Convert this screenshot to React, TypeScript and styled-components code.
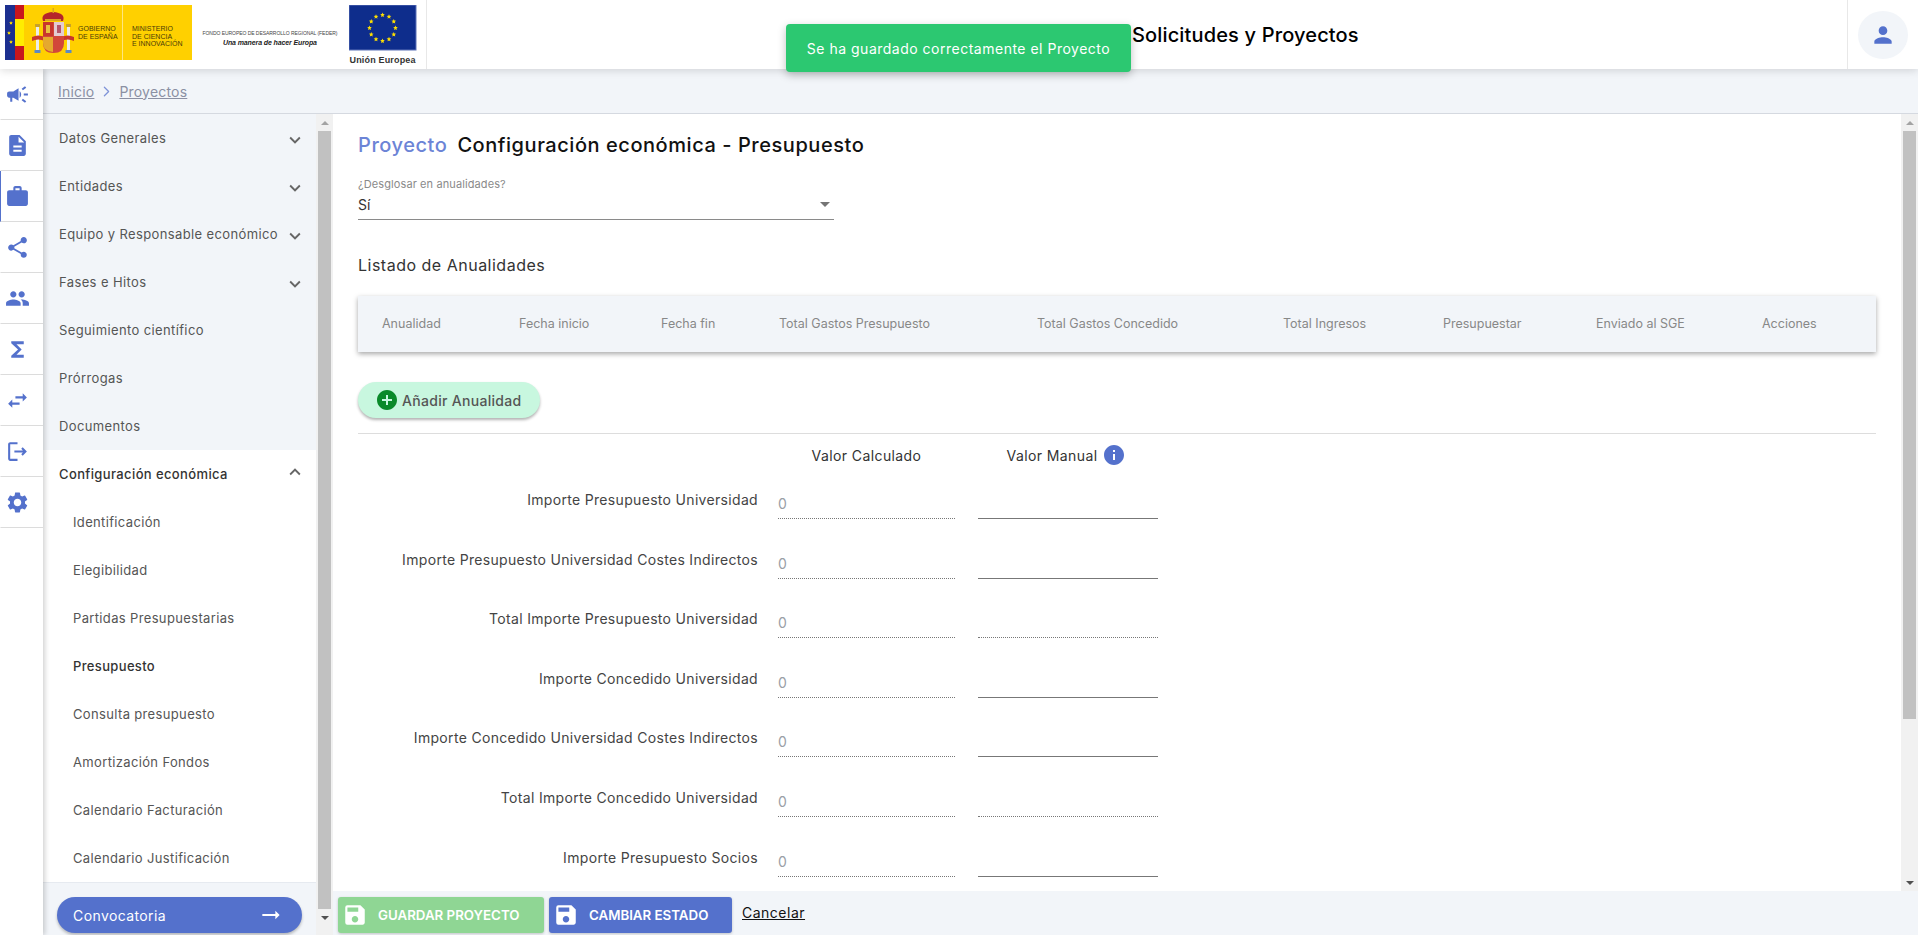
import { ChevronRight } from 'lucide-react'
import {
  MdAddCircle,
  MdArrowRightAlt,
  MdArrowDropDown,
  MdCampaign,
  MdDescription,
  MdExpandLess,
  MdExpandMore,
  MdFunctions,
  MdInfo,
  MdOutlineLogout,
  MdPeople,
  MdPerson,
  MdSave,
  MdSettings,
  MdShare,
  MdSwapHoriz,
  MdWork
} from 'react-icons/md'
import styled, { createGlobalStyle } from 'styled-components'

const PRIMARY = '#5471cc'
const PALE = '#f2f5f9'
const FONT = 'Inter, "Noto Sans", sans-serif'

const GlobalStyle = createGlobalStyle`
  html, body {
    margin: 0;
    height: 100%;
    overflow: hidden;
    background: #fff;
    font-family: ${FONT};
  }
  * {
    box-sizing: border-box;
  }
`

const railIcons = [
  MdCampaign,
  MdDescription,
  MdWork,
  MdShare,
  MdPeople,
  MdFunctions,
  MdSwapHoriz,
  MdOutlineLogout,
  MdSettings
]

const topItems = [
  { label: 'Datos Generales', arrow: true },
  { label: 'Entidades', arrow: true },
  { label: 'Equipo y Responsable económico', arrow: true },
  { label: 'Fases e Hitos', arrow: true },
  { label: 'Seguimiento científico' },
  { label: 'Prórrogas' },
  { label: 'Documentos' }
]

const subItems = [
  'Identificación',
  'Elegibilidad',
  'Partidas Presupuestarias',
  'Presupuesto',
  'Consulta presupuesto',
  'Amortización Fondos',
  'Calendario Facturación',
  'Calendario Justificación'
]

const columns = [
  'Anualidad',
  'Fecha inicio',
  'Fecha fin',
  'Total Gastos Presupuesto',
  'Total Gastos Concedido',
  'Total Ingresos',
  'Presupuestar',
  'Enviado al SGE',
  'Acciones'
]

const amounts = [
  { label: 'Importe Presupuesto Universidad', manual: true },
  { label: 'Importe Presupuesto Universidad Costes Indirectos', manual: true },
  { label: 'Total Importe Presupuesto Universidad' },
  { label: 'Importe Concedido Universidad', manual: true },
  { label: 'Importe Concedido Universidad Costes Indirectos', manual: true },
  { label: 'Total Importe Concedido Universidad' },
  { label: 'Importe Presupuesto Socios', manual: true }
]

const Star = ({ x, y, r }: { x: number; y: number; r: number }) => {
  const points = Array.from({ length: 10 }, (_, i) => {
    const radius = i % 2 ? r * 0.45 : r
    const angle = (Math.PI / 5) * i - Math.PI / 2
    return `${x + radius * Math.cos(angle)},${y + radius * Math.sin(angle)}`
  })
  return <polygon points={points.join(' ')} fill='#ffe000' />
}

const SpainLogo = () => (
  <svg width='187' height='55' viewBox='0 0 187 55'>
    <rect width='187' height='55' fill='#ffd000' />
    <rect width='10' height='55' fill='#1c2f8f' />
    <rect x='10' width='9' height='55' fill='#c8161d' />
    <rect x='10' y='14' width='9' height='27' fill='#ffec00' />
    <Star x={6} y={18} r={2} />
    <Star x={4} y={28} r={2} />
    <Star x={6} y={37} r={2} />
    <rect x='117' width='1' height='55' fill='#ffe680' />
    {/* crown */}
    <path d='M38 16 q-3 -8 10 -9 q13 1 10 9 z' fill='#b5252a' />
    <rect x='40' y='14' width='16' height='2' fill='#d9a520' />
    <rect x='47.500' y='3' width='1.500' height='5' fill='#d9a520' />
    {/* pillars */}
    <rect x='30' y='19' width='5' height='3' fill='#c9a227' />
    <rect x='31' y='22' width='3' height='23' fill='#ececec' />
    <rect x='61' y='19' width='5' height='3' fill='#c9a227' />
    <rect x='62' y='22' width='3' height='23' fill='#ececec' />
    <rect x='29.500' y='45' width='6' height='3' fill='#5b8ac4' />
    <rect x='60.500' y='45' width='6' height='3' fill='#5b8ac4' />
    {/* ribbons */}
    <path d='M27 32 q6 -3 13 0 v4 q-7 -3 -13 0 z' fill='#c8362d' />
    <path d='M69 32 q-6 -3 -13 0 v4 q7 -3 13 0 z' fill='#c8362d' />
    {/* shield */}
    <path d='M38 17 h21 v21 q0 10 -10.500 10 q-10.500 0 -10.500 -10 z' fill='#d2473a' />
    <rect x='49' y='17' width='10' height='14' fill='#e3ccd2' />
    <rect x='38' y='17' width='10' height='14' fill='#c8362d' />
    <rect x='41' y='20' width='4' height='8' fill='#e8c040' />
    <rect x='52' y='20' width='4' height='8' fill='#b5566a' />
    <path d='M38 32 h10 v15 q-10 -1 -10 -9 z' fill='#e5a92e' />
    <LogoText x='73' y='26'>GOBIERNO</LogoText>
    <LogoText x='73' y='33.500'>DE ESPAÑA</LogoText>
    <LogoText x='127' y='26'>MINISTERIO</LogoText>
    <LogoText x='127' y='33.500'>DE CIENCIA</LogoText>
    <LogoText x='127' y='41'>E INNOVACIÓN</LogoText>
  </svg>
)

const FederLogo = () => (
  <svg width='140' height='20' viewBox='0 0 140 20'>
    <FederLine x='70' y='6' textLength='135'>
      FONDO EUROPEO DE DESARROLLO REGIONAL (FEDER)
    </FederLine>
    <FederMotto x='70' y='16' textLength='94'>
      Una manera de hacer Europa
    </FederMotto>
  </svg>
)

const EuLogo = () => {
  const stars = Array.from({ length: 12 }, (_, i) => {
    const angle = (Math.PI / 6) * i
    return { x: 33.500 + 13 * Math.sin(angle), y: 23 - 13 * Math.cos(angle) }
  })
  return (
    <svg width='68' height='60' viewBox='0 0 68 60'>
      <rect width='67' height='45' fill='#0e2d8c' stroke='#5c72b8' />
      {stars.map((s) => (
        <Star key={`${s.x}-${s.y}`} x={s.x} y={s.y} r={2.500} />
      ))}
      <EuCaption x='33.500' y='58' textLength='66'>
        Unión Europea
      </EuCaption>
    </svg>
  )
}

const App = () => (
  <Page>
    <GlobalStyle />
    <Header>
      <Logos>
        <SpainLogo />
        <FederSlot>
          <FederLogo />
        </FederSlot>
        <EuLogo />
      </Logos>
      <AppTitle>Solicitudes y Proyectos</AppTitle>
      <UserSlot>
        <Avatar>
          <MdPerson size={26} />
        </Avatar>
      </UserSlot>
    </Header>

    <Toast>Se ha guardado correctamente el Proyecto</Toast>

    <Body>
      <Rail>
        {railIcons.map((Icon, i) => (
          <RailItem key={i} $active={i === 2}>
            <Icon size={25} />
          </RailItem>
        ))}
      </Rail>

      <Main>
        <Breadcrumb>
          <Crumb>Inicio</Crumb>
          <ChevronRight size={17} strokeWidth={1.75} color='#7f93d8' />
          <Crumb>Proyectos</Crumb>
        </Breadcrumb>

        <Workspace>
          <Sidebar>
            <SideNav>
              <TopMenu>
                {topItems.map((item) => (
                  <MenuRow key={item.label}>
                    {item.label}
                    {item.arrow && <MdExpandMore size={22} />}
                  </MenuRow>
                ))}
              </TopMenu>
              <SubMenu>
                <MenuRow $strong>
                  Configuración económica
                  <MdExpandLess size={22} />
                </MenuRow>
                {subItems.map((label) => (
                  <SubRow key={label} $current={label === 'Presupuesto'}>
                    {label}
                  </SubRow>
                ))}
              </SubMenu>
              <SideFooter>
                <PillButton>
                  Convocatoria
                  <MdArrowRightAlt size={26} />
                </PillButton>
              </SideFooter>
            </SideNav>
            <ScrollTrack>
              <ScrollArrow $up />
              <ScrollThumb $size={778} $inset={2} />
              <ScrollArrow />
            </ScrollTrack>
          </Sidebar>

          <Panel>
            <PanelBody>
              <Content>
                <PageTitle>
                  <TitleAccent>Proyecto</TitleAccent>
                  Configuración económica - Presupuesto
                </PageTitle>

                <SelectField>
                  <SelectLabel>¿Desglosar en anualidades?</SelectLabel>
                  <SelectValue>
                    Sí
                    <MdArrowDropDown size={24} />
                  </SelectValue>
                </SelectField>

                <SectionTitle>Listado de Anualidades</SectionTitle>

                <TableHead>
                  {columns.map((c) => (
                    <span key={c}>{c}</span>
                  ))}
                </TableHead>

                <AddButton>
                  <AddIcon>
                    <MdAddCircle size={24} />
                  </AddIcon>
                  Añadir Anualidad
                </AddButton>

                <Divider />

                <AmountHead>
                  <span />
                  <AmountColumn>Valor Calculado</AmountColumn>
                  <AmountColumn>
                    Valor Manual
                    <MdInfo size={24} color={PRIMARY} />
                  </AmountColumn>
                </AmountHead>

                <AmountRows>
                  {amounts.map((row) => (
                    <AmountRow key={row.label}>
                      <AmountLabel>{row.label}</AmountLabel>
                      <AmountValue>0</AmountValue>
                      <ManualInput $editable={row.manual} />
                    </AmountRow>
                  ))}
                </AmountRows>
              </Content>
              <ScrollTrack>
                <ScrollArrow $up />
                <ScrollThumb $size={588} $inset={2} />
                <Spacer />
                <ScrollArrow />
              </ScrollTrack>
            </PanelBody>

            <ActionBar>
              <ActionButton $color='#8fd694' $width={206}>
                <MdSave size={26} />
                GUARDAR PROYECTO
              </ActionButton>
              <ActionButton $color={PRIMARY} $width={183}>
                <MdSave size={26} />
                CAMBIAR ESTADO
              </ActionButton>
              <CancelLink>Cancelar</CancelLink>
            </ActionBar>
          </Panel>
        </Workspace>
      </Main>
    </Body>
  </Page>
)

export default App

const Page = styled.div`
  position: relative;
  width: 1918px;
  height: 935px;
  display: flex;
  flex-direction: column;
  overflow: hidden;
`

const Header = styled.header`
  position: relative;
  z-index: 3;
  height: 69px;
  flex-shrink: 0;
  display: flex;
  align-items: center;
  background: #fff;
  box-shadow: 0 2px 8px rgba(0, 0, 0, 0.13);
`

const Logos = styled.div`
  width: 427px;
  height: 100%;
  padding: 5px 0 0 5px;
  display: flex;
  align-items: flex-start;
  border-right: 1px solid #e8e8e8;
`

const FederSlot = styled.div`
  width: 157px;
  padding: 24px 0 0 8px;
`

const LogoText = styled.text`
  font-family: 'Liberation Sans', sans-serif;
  font-size: 7px;
  fill: #4a3c08;
`

const FederLine = styled.text`
  font-family: 'Liberation Sans', sans-serif;
  font-size: 5px;
  fill: #444;
  text-anchor: middle;
`

const FederMotto = styled.text`
  font-family: 'Liberation Sans', sans-serif;
  font-size: 7px;
  font-style: italic;
  font-weight: 700;
  fill: #222;
  text-anchor: middle;
`

const EuCaption = styled.text`
  font-family: 'Liberation Sans', sans-serif;
  font-size: 9px;
  font-weight: 700;
  fill: #333;
  text-anchor: middle;
`

const AppTitle = styled.h1`
  flex: 1;
  margin: 0;
  padding-left: 705px;
  font-size: 20px;
  font-weight: 500;
  letter-spacing: 0.15px;
  color: #000;
  white-space: nowrap;
`

const UserSlot = styled.div`
  width: 71px;
  height: 100%;
  display: flex;
  align-items: center;
  justify-content: center;
  border-left: 1px solid #e8e8e8;
`

const Avatar = styled.div`
  width: 50px;
  height: 48px;
  border-radius: 50%;
  background: ${PALE};
  color: ${PRIMARY};
  display: flex;
  align-items: center;
  justify-content: center;
`

const Toast = styled.div`
  position: absolute;
  z-index: 5;
  left: 786px;
  top: 24px;
  width: 345px;
  height: 48px;
  display: flex;
  align-items: center;
  justify-content: center;
  border-radius: 4px;
  background: #2cc871;
  color: #fff;
  font-size: 14px;
  letter-spacing: 0.5px;
  box-shadow: 0 3px 8px rgba(0, 0, 0, 0.25);
`

const Body = styled.div`
  flex: 1;
  min-height: 0;
  display: flex;
`

const Rail = styled.nav`
  position: relative;
  z-index: 2;
  width: 43px;
  flex-shrink: 0;
  background: #fff;
  box-shadow: 2px 0 5px rgba(0, 0, 0, 0.18);
`

const RailItem = styled.div<{ $active?: boolean }>`
  height: 51px;
  padding-left: 4px;
  display: flex;
  align-items: center;
  color: ${PRIMARY};
  border-bottom: 1px solid #dcdcdc;
  border-left: 1px solid ${(p) => (p.$active ? PRIMARY : 'transparent')};
`

const Main = styled.main`
  flex: 1;
  min-width: 0;
  display: flex;
  flex-direction: column;
`

const Breadcrumb = styled.div`
  height: 45px;
  flex-shrink: 0;
  padding-left: 15px;
  display: flex;
  align-items: center;
  gap: 4px;
  background: ${PALE};
  border-bottom: 1px solid #d5d9e0;
`

const Crumb = styled.a`
  font-size: 14px;
  letter-spacing: 0.2px;
  color: #8b90a3;
  text-decoration: underline;
`

const Workspace = styled.div`
  flex: 1;
  min-height: 0;
  display: flex;
`

const Sidebar = styled.aside`
  width: 290px;
  flex-shrink: 0;
  display: flex;
`

const SideNav = styled.div`
  width: 273px;
  display: flex;
  flex-direction: column;
`

const TopMenu = styled.div`
  background: ${PALE};
`

const SubMenu = styled.div`
  background: #fff;
`

const MenuRow = styled.div<{ $strong?: boolean }>`
  height: 48px;
  padding: 0 10px 1px 16px;
  display: flex;
  align-items: center;
  justify-content: space-between;
  font-size: 13px;
  letter-spacing: 0.38px;
  font-weight: ${(p) => (p.$strong ? 500 : 400)};
  color: ${(p) => (p.$strong ? '#333' : '#555')};
  white-space: nowrap;
  svg {
    flex-shrink: 0;
    color: #666;
    margin-top: ${(p) => (p.$strong ? '-3px' : '4px')};
  }
`

const SubRow = styled.div<{ $current?: boolean }>`
  height: 48px;
  padding: 0 0 1px 30px;
  display: flex;
  align-items: center;
  font-size: 13px;
  letter-spacing: 0.35px;
  font-weight: ${(p) => (p.$current ? 500 : 400)};
  color: ${(p) => (p.$current ? '#333' : '#555')};
`

const SideFooter = styled.div`
  flex: 1;
  padding: 14px 14px 0;
  background: ${PALE};
  border-top: 1px solid #e6eaf0;
`

const PillButton = styled.button`
  width: 100%;
  height: 36px;
  padding: 0 18px 0 16px;
  display: flex;
  align-items: center;
  justify-content: space-between;
  border: 0;
  border-radius: 18px;
  background: ${PRIMARY};
  color: #fff;
  font-family: ${FONT};
  font-size: 14px;
  letter-spacing: 0.4px;
  box-shadow: 0 2px 3px rgba(0, 0, 0, 0.25);
`

const ScrollTrack = styled.div`
  width: 17px;
  flex-shrink: 0;
  display: flex;
  flex-direction: column;
  background: #f1f1f1;
`

const ScrollArrow = styled.div<{ $up?: boolean }>`
  height: 17px;
  flex-shrink: 0;
  display: flex;
  align-items: center;
  justify-content: center;
  &::after {
    content: '';
    border-left: 4px solid transparent;
    border-right: 4px solid transparent;
    border-bottom: ${(p) => (p.$up ? '4px solid #a3a3a3' : '0')};
    border-top: ${(p) => (p.$up ? '0' : '4px solid #505050')};
  }
`

const ScrollThumb = styled.div<{ $size: number; $inset: number }>`
  height: ${(p) => p.$size}px;
  flex-shrink: 0;
  margin: 0 ${(p) => p.$inset}px;
  background: #c1c1c1;
`

const Spacer = styled.div`
  flex: 1;
`

const Panel = styled.section`
  flex: 1;
  min-width: 0;
  display: flex;
  flex-direction: column;
`

const PanelBody = styled.div`
  height: 777px;
  flex-shrink: 0;
  display: flex;
`

const Content = styled.div`
  flex: 1;
  min-width: 0;
  padding: 16px 25px 0;
  overflow: hidden;
  background: #fff;
`

const PageTitle = styled.h2`
  margin: 0;
  height: 30px;
  display: flex;
  align-items: center;
  gap: 10px;
  font-size: 20px;
  font-weight: 500;
  letter-spacing: 0.55px;
  color: #111;
`

const TitleAccent = styled.span`
  color: #6c84d6;
`

const SelectField = styled.div`
  width: 476px;
  margin-top: 17px;
  border-bottom: 1px solid #8a8a8a;
`

const SelectLabel = styled.div`
  font-size: 11px;
  line-height: 14px;
  letter-spacing: 0.1px;
  color: #8a8a8a;
`

const SelectValue = styled.div`
  height: 28px;
  padding-bottom: 2px;
  display: flex;
  align-items: center;
  justify-content: space-between;
  font-size: 14px;
  color: #333;
  svg {
    color: #757575;
    margin-right: -3px;
  }
`

const SectionTitle = styled.h3`
  margin: 33px 0 0;
  font-size: 16px;
  line-height: 24px;
  font-weight: 400;
  letter-spacing: 0.5px;
  color: #333;
`

const TableHead = styled.div`
  height: 56px;
  margin-top: 19px;
  padding: 0 0 2px 24px;
  display: grid;
  grid-template-columns: 137px 142px 118px 258px 246px 160px 153px 166px 90px;
  align-items: center;
  background: ${PALE};
  font-size: 12.500px;
  color: #888;
  white-space: nowrap;
  box-shadow: 0 2px 5px rgba(0, 0, 0, 0.35);
`

const AddButton = styled.button`
  width: 182px;
  height: 36px;
  margin-top: 30px;
  padding: 0 0 0 17px;
  display: flex;
  align-items: center;
  gap: 3px;
  border: 0;
  border-radius: 18px;
  background: #c8f7df;
  color: #555;
  font-family: ${FONT};
  font-size: 14px;
  font-weight: 500;
  letter-spacing: 0.3px;
  box-shadow: 0 2px 3px rgba(0, 0, 0, 0.3);
`

const AddIcon = styled.span`
  display: flex;
  color: #0a8a2a;
`

const Divider = styled.hr`
  height: 1px;
  margin: 15px 0 0;
  border: 0;
  background: #dddddd;
`

const AmountHead = styled.div`
  margin-top: 9px;
  height: 20px;
  display: grid;
  grid-template-columns: 400px 177px 183px;
  column-gap: 20px;
  font-size: 14px;
  letter-spacing: 0.4px;
  color: #333;
`

const AmountColumn = styled.div`
  display: flex;
  align-items: center;
  justify-content: center;
  gap: 5px;
`

const AmountRows = styled.div`
  margin-top: 16px;
  display: flex;
  flex-direction: column;
  gap: 19.600px;
`

const AmountRow = styled.div`
  height: 40px;
  display: grid;
  grid-template-columns: 400px 177px 183px;
  column-gap: 20px;
`

const AmountLabel = styled.label`
  padding-top: 11px;
  line-height: 20px;
  text-align: right;
  font-size: 14px;
  letter-spacing: 0.32px;
  color: #444;
  white-space: nowrap;
`

const AmountValue = styled.div`
  padding-top: 15px;
  line-height: 20px;
  font-size: 14px;
  color: #9aa0a6;
  border-bottom: 1px dotted #777;
`

const ManualInput = styled.div<{ $editable?: boolean }>`
  margin-left: 3px;
  border-bottom: 1px ${(p) => (p.$editable ? 'solid #777' : 'dotted #777')};
`

const ActionBar = styled.div`
  flex: 1;
  padding: 6px 0 0 5px;
  display: flex;
  align-items: flex-start;
  gap: 5px;
  background: ${PALE};
`

const ActionButton = styled.button<{ $color: string; $width: number }>`
  width: ${(p) => p.$width}px;
  height: 36px;
  padding: 0 0 0 4px;
  display: flex;
  align-items: center;
  gap: 10px;
  border: 0;
  border-radius: 3px;
  background: ${(p) => p.$color};
  color: #fff;
  font-family: ${FONT};
  font-size: 13.300px;
  font-weight: 600;
  white-space: nowrap;
  box-shadow: 0 1px 3px rgba(0, 0, 0, 0.2);
`

const CancelLink = styled.a`
  margin: 7px 0 0 5px;
  font-size: 14px;
  letter-spacing: 0.5px;
  color: #111;
  text-decoration: underline;
`
